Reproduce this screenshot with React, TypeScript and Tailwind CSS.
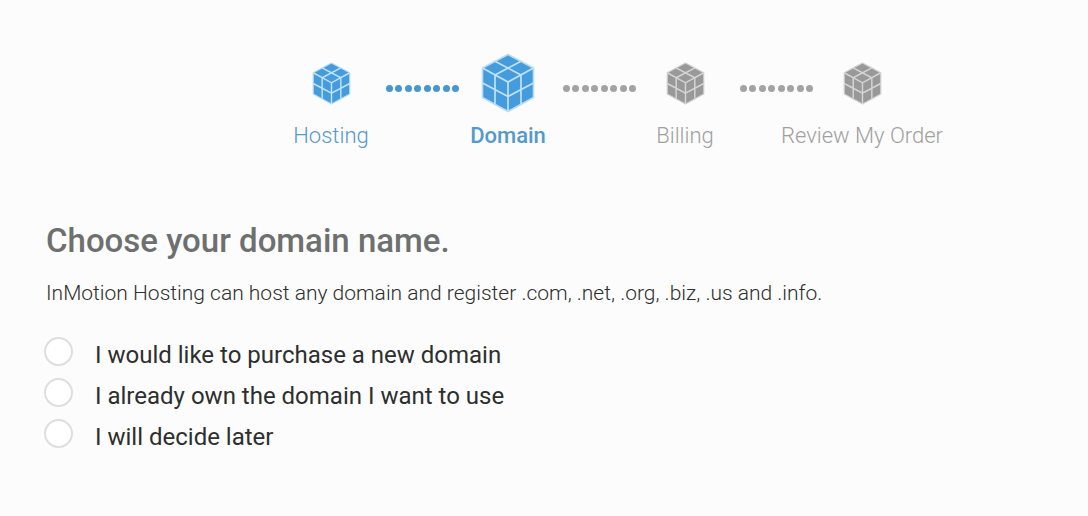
type StepState = "done" | "current" | "todo";

const steps: { label: string; state: StepState }[] = [
  { label: "Hosting", state: "done" },
  { label: "Domain", state: "current" },
  { label: "Billing", state: "todo" },
  { label: "Review My Order", state: "todo" },
];

const options = [
  { id: "new", label: "I would like to purchase a new domain" },
  { id: "own", label: "I already own the domain I want to use" },
  { id: "later", label: "I will decide later" },
];

const labelStyles: Record<StepState, string> = {
  done: "font-light text-[#5499cb]",
  current: "font-medium text-[#5499cb]",
  todo: "font-light text-[#a0a0a0]",
};

function Cube({ state }: { state: StepState }) {
  const todo = state === "todo";
  return (
    <svg
      viewBox="0 0 54 60"
      aria-hidden="true"
      className={state === "current" ? "h-[60px] w-[54px]" : "h-[43px] w-[39px]"}
    >
      <path
        d="M27 1.5 52.5 15V44.5L27 58.5 1.5 44.5V15Z"
        fill={todo ? "#999999" : "#459cdc"}
        stroke={todo ? "#d0d0d0" : "#b9dbf3"}
        strokeWidth="1.6"
        strokeLinejoin="round"
      />
      <path
        d="M1.5 15 27 29 52.5 15M27 29V58.5M14 8.2 40 22V51.2M40 8.2 14 22V51.2M1.5 30 27 43.5 52.5 30"
        fill="none"
        stroke={todo ? "#d6d6d6" : "#c4e1f6"}
        strokeWidth={state === "current" ? 1.7 : 2}
      />
    </svg>
  );
}

function Dots({ active }: { active: boolean }) {
  return (
    <li aria-hidden="true" className="mt-8 mr-px ml-[7px] flex w-[73px] shrink-0 justify-between">
      {Array.from({ length: 8 }, (_, i) => (
        <span key={i} className={active ? "size-[7px] rounded-full bg-[#4796d2]" : "size-[7px] rounded-full bg-[#a3a3a3]"} />
      ))}
    </li>
  );
}

function Progress() {
  return (
    <ol className="flex justify-center pl-[105px]">
      {steps.flatMap((step, i) => [
        <li
          key={step.label}
          aria-current={step.state === "current" ? "step" : undefined}
          className="flex w-24 shrink-0 flex-col items-center"
        >
          <span className="flex h-[60px] items-center">
            <Cube state={step.state} />
          </span>
          <span className={`mt-[9px] text-[22px] leading-7 whitespace-nowrap ${labelStyles[step.state]}`}>{step.label}</span>
        </li>,
        i < steps.length - 1 && <Dots key={`${step.label}-dots`} active={step.state === "done"} />,
      ])}
    </ol>
  );
}

export default function App() {
  return (
    <main className="min-h-screen overflow-x-hidden bg-[#fcfcfc] px-11 pt-[53px] pb-12 font-['Roboto','Liberation_Sans',sans-serif]">
      <Progress />
      <form className="mt-[71px]">
        <h1 id="domain-heading" className="pl-0.5 text-[33px] leading-10 font-medium text-[#6d706f]">
          Choose your domain name.
        </h1>
        <p className="mt-[18px] pl-0.5 text-[21px] leading-7 font-light text-[#2d2f2e]">
          InMotion Hosting can host any domain and register .com, .net, .org, .biz, .us and .info.
        </p>
        <div role="radiogroup" aria-labelledby="domain-heading" className="mt-7">
          {options.map((option) => (
            <div key={option.id} className="flex h-[41px] gap-[22px]">
              <input
                type="radio"
                name="domain"
                id={option.id}
                className="mt-0.5 size-[29px] shrink-0 appearance-none rounded-full border-2 border-[#dedede] bg-white checked:border-8 checked:border-[#459cdc]"
              />
              <label htmlFor={option.id} className="text-2xl leading-10 text-[#2d2f2e]">
                {option.label}
              </label>
            </div>
          ))}
        </div>
      </form>
    </main>
  );
}
